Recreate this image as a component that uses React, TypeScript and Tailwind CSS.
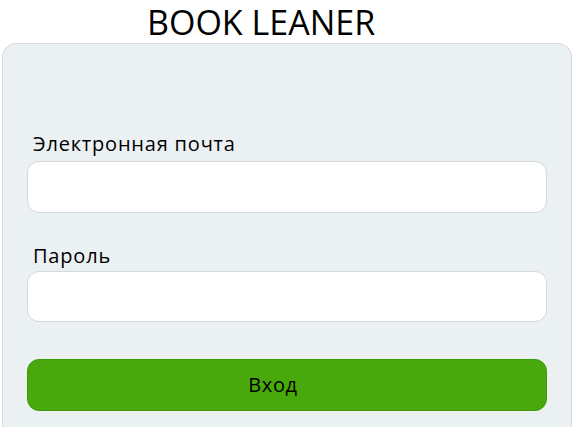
export default function App() {
  return (
    <div className="h-[427px] w-[573px] overflow-hidden bg-white font-['Open_Sans',sans-serif] text-black">
      <h1 className="pl-[147px] pt-[2px] text-[34px] leading-[41px] font-normal">BOOK LEANER</h1>
      <div className="ml-[2px] mr-[1px] h-[400px] rounded-t-[14px] border border-[#d4dadd] bg-[#ebf0f3] px-[24px] pt-[87px]">
        <label className="block pl-[6px] text-[20px] leading-[26px] tracking-[0.8px]">Электронная почта</label>
        <input className="mt-[4px] block h-[52px] w-[520px] rounded-[12px] border border-[#d3d8db] bg-white px-3 outline-none" />
        <label className="mt-[30px] block pl-[6px] text-[20px] leading-[26px] tracking-[0.8px]">Пароль</label>
        <input
          type="password"
          className="mt-[2px] block h-[51px] w-[520px] rounded-[12px] border border-[#d3d8db] bg-white px-3 outline-none"
        />
        <button className="mt-[37px] block h-[52px] w-[520px] rounded-[12px] border border-[#3f9a0c] bg-[#49a90c] pr-[28px] text-[20px] tracking-[0.6px] text-black">
          Вход
        </button>
      </div>
    </div>
  );
}
